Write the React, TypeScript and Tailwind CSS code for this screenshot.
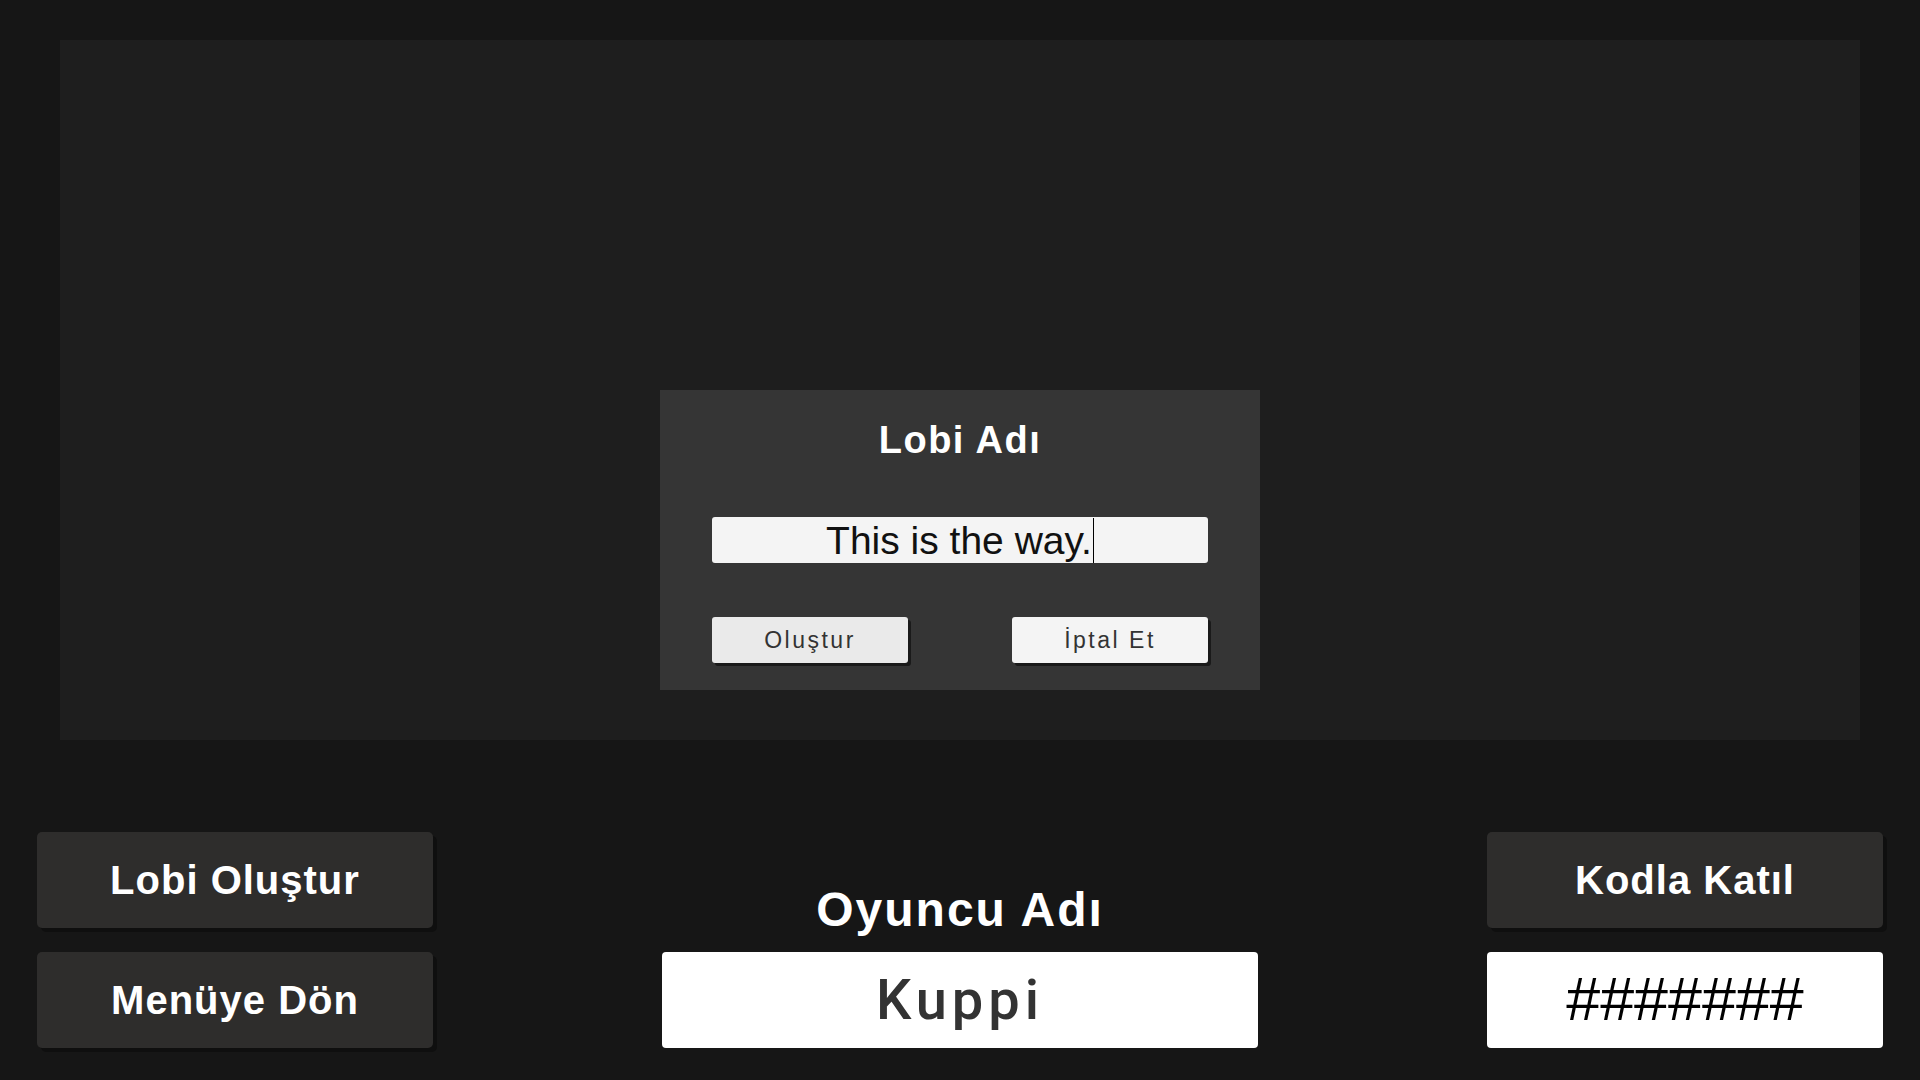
const sans = "font-['Liberation_Sans',Arial,sans-serif]";

const DarkButton = ({ label }: { label: string }) => (
  <button
    className={`w-[396px] h-[96px] rounded-[5px] bg-[#2e2d2c] shadow-[4px_4px_0_#0f0f0f] flex items-center justify-center text-white text-[40px] font-bold tracking-[1px] ${sans}`}
  >
    {label}
  </button>
);

const DialogButton = ({ label, tone }: { label: string; tone: string }) => (
  <button
    className={`w-[196px] h-[46px] rounded-[3px] ${tone} shadow-[3px_3px_0_#1a1a1a] flex items-center justify-center text-[#333333] text-[23px] tracking-[2.5px] ${sans}`}
  >
    {label}
  </button>
);

export default function App() {
  return (
    <div className="w-[1920px] h-[1080px] bg-[#161616] flex flex-col overflow-hidden">
      {/* Lobby panel */}
      <div className="mt-[40px] mx-[60px] h-[700px] bg-[#1e1e1e] pt-[350px] pl-[600px]">
        {/* Lobby name dialog */}
        <div className="w-[600px] h-[300px] bg-[#353535] px-[52px] pt-[30px] flex flex-col">
          <div className={`h-[41px] flex items-center justify-center text-white text-[38px] font-bold tracking-[1.5px] ${sans}`}>
            Lobi Adı
          </div>

          <div className="mt-[56px] h-[46px] rounded-[3px] bg-[#f4f4f4] flex items-center justify-center">
            <span className={`whitespace-nowrap text-[39px] leading-none text-[#111111] ${sans}`}>
              This is the way.
            </span>
            <span className="ml-px w-px h-[45px] bg-black" />
          </div>

          <div className="mt-[54px] flex justify-between">
            <DialogButton label="Oluştur" tone="bg-[#eaeaea]" />
            <DialogButton label="İptal Et" tone="bg-[#f4f4f4]" />
          </div>
        </div>
      </div>

      {/* Bottom controls */}
      <div className="mt-[92px] px-[37px] flex items-end justify-between">
        <div className="flex flex-col gap-[24px]">
          <DarkButton label="Lobi Oluştur" />
          <DarkButton label="Menüye Dön" />
        </div>

        <div className="w-[596px] flex flex-col">
          <div className={`h-[48px] mb-[18px] flex items-center justify-center text-white text-[48px] font-bold tracking-[2px] ${sans}`}>
            Oyuncu Adı
          </div>
          <div className={`h-[96px] rounded-[4px] bg-white flex items-center justify-center text-[#333333] text-[56px] font-medium tracking-[5px] font-['Roboto','Liberation_Sans',sans-serif]`}>
            Kuppi
          </div>
        </div>

        <div className="flex flex-col gap-[24px]">
          <DarkButton label="Kodla Katıl" />
          <div className={`w-[396px] h-[96px] rounded-[4px] bg-white flex items-center justify-center text-black text-[61px] ${sans}`}>
            #######
          </div>
        </div>
      </div>
    </div>
  );
}
